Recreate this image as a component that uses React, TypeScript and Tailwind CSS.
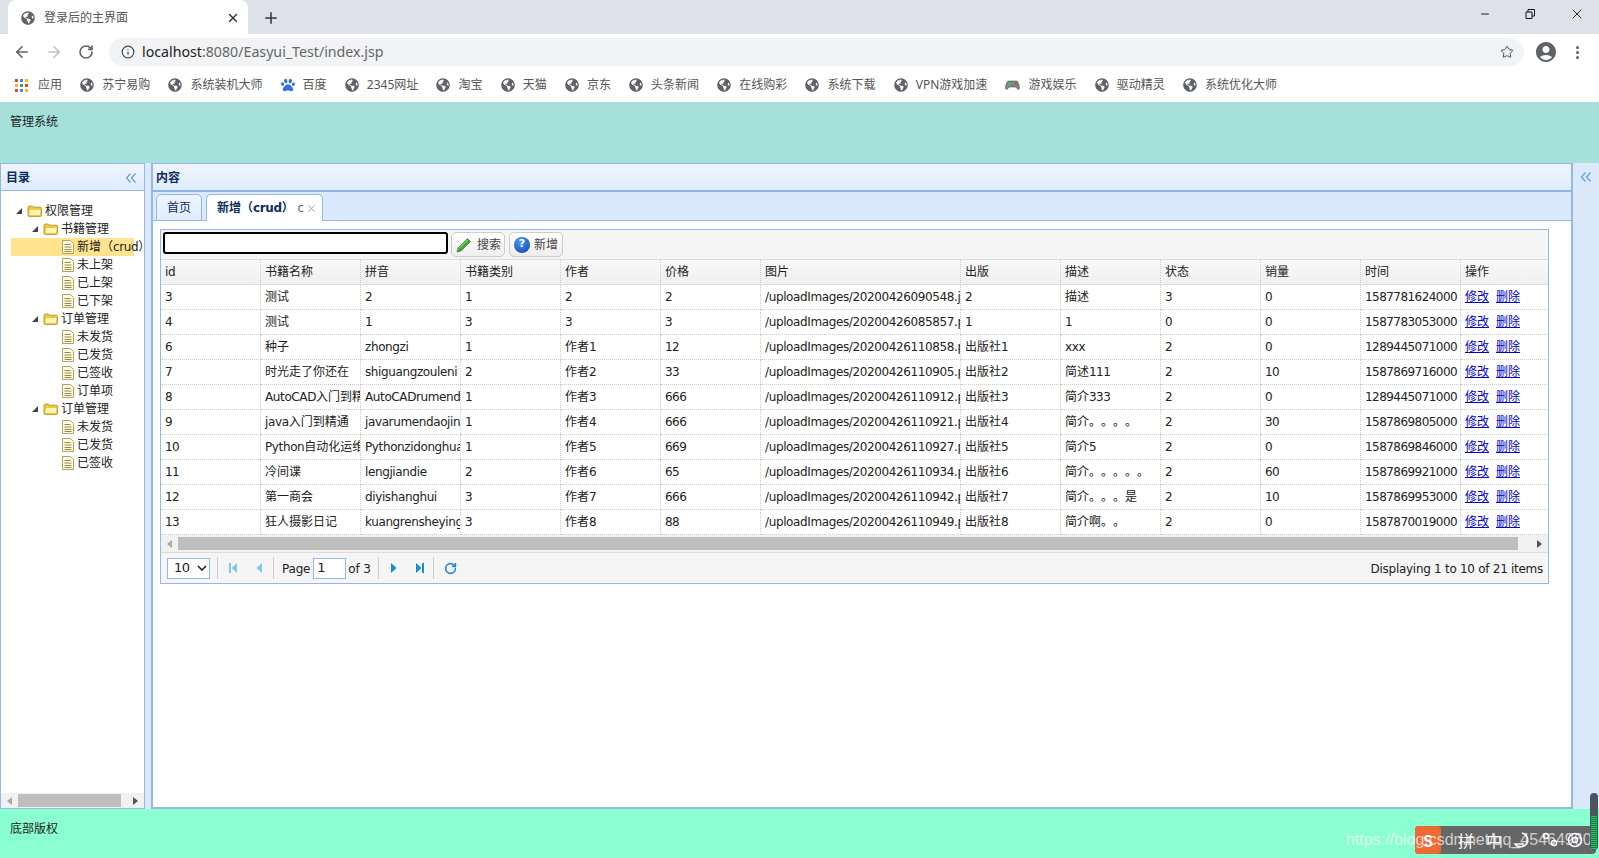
import { ArrowLeft, ArrowRight, Info, Minus, Plus, RotateCw, Star, X } from 'lucide-react';
import { FaGlobeAmericas, FaPaw } from 'react-icons/fa';
import { MdAccountCircle } from 'react-icons/md';

const bookmarks = [
  '苏宁易购', '系统装机大师', '百度', '2345网址', '淘宝', '天猫', '京东', '头条新闻',
  '在线购彩', '系统下载', 'VPN游戏加速', '游戏娱乐', '驱动精灵', '系统优化大师',
];

const columns = ['id', '书籍名称', '拼音', '书籍类别', '作者', '价格', '图片', '出版', '描述', '状态', '销量', '时间', '操作'];

const rows = [
  ['3', '测试', '2', '1', '2', '2', '/uploadImages/20200426090548.jpg', '2', '描述', '3', '0', '1587781624000'],
  ['4', '测试', '1', '3', '3', '3', '/uploadImages/20200426085857.png', '1', '1', '0', '0', '1587783053000'],
  ['6', '种子', 'zhongzi', '1', '作者1', '12', '/uploadImages/20200426110858.png', '出版社1', 'xxx', '2', '0', '1289445071000'],
  ['7', '时光走了你还在', 'shiguangzouleni', '2', '作者2', '33', '/uploadImages/20200426110905.png', '出版社2', '简述111', '2', '10', '1587869716000'],
  ['8', 'AutoCAD入门到精通', 'AutoCADrumendao', '1', '作者3', '666', '/uploadImages/20200426110912.png', '出版社3', '简介333', '2', '0', '1289445071000'],
  ['9', 'java入门到精通', 'javarumendaojing', '1', '作者4', '666', '/uploadImages/20200426110921.png', '出版社4', '简介。。。。', '2', '30', '1587869805000'],
  ['10', 'Python自动化运维', 'Pythonzidonghua', '1', '作者5', '669', '/uploadImages/20200426110927.png', '出版社5', '简介5', '2', '0', '1587869846000'],
  ['11', '冷间谍', 'lengjiandie', '2', '作者6', '65', '/uploadImages/20200426110934.png', '出版社6', '简介。。。。。', '2', '60', '1587869921000'],
  ['12', '第一商会', 'diyishanghui', '3', '作者7', '666', '/uploadImages/20200426110942.png', '出版社7', '简介。。。是', '2', '10', '1587869953000'],
  ['13', '狂人摄影日记', 'kuangrensheying', '3', '作者8', '88', '/uploadImages/20200426110949.png', '出版社8', '简介啊。。', '2', '0', '1587870019000'],
];

const tree: [number, string, boolean, boolean?][] = [
  [0, '权限管理', true],
  [1, '书籍管理', true],
  [2, '新增（crud）', false, true],
  [2, '未上架', false],
  [2, '已上架', false],
  [2, '已下架', false],
  [1, '订单管理', true],
  [2, '未发货', false],
  [2, '已发货', false],
  [2, '已签收', false],
  [2, '订单项', false],
  [1, '订单管理', true],
  [2, '未发货', false],
  [2, '已发货', false],
  [2, '已签收', false],
];

// latin runs are tightened, the reference has hinted Verdana which sets narrower than DejaVu
function T({ s }: { s: string }) {
  const parts = s.match(/[\x00-\x7f]+|[^\x00-\x7f]+/g) ?? [];
  return (
    <>
      {parts.map((p, i) =>
        /^\d+$/.test(p) ? (
          <span key={i} className="tracking-[-0.55px]">{p}</span>
        ) : /^[\x00-\x7f]/.test(p) ? (
          <span key={i} className="tracking-[-0.38px]">{p}</span>
        ) : (
          <span key={i}>{p}</span>
        ),
      )}
    </>
  );
}

function Chevrons({ className }: { className?: string }) {
  return (
    <svg width="12" height="12" viewBox="0 0 12 12" fill="none" stroke="#5d9fdc" strokeWidth="1.2" className={className}>
      <path d="M5.5 1.5 1.5 6l4 4.5M10.5 1.5 6.5 6l4 4.5" />
    </svg>
  );
}

function FolderIcon() {
  return (
    <svg width="16" height="14" viewBox="0 0 16 14" className="shrink-0">
      <path d="M1 3.5C1 2.5 1.7 2 2.5 2h3l1.2 1.2h6.6c.8 0 1.2.5 1.2 1.2V11c0 1-.6 1.6-1.5 1.6h-10C1.6 12.600 1 12 1 11z" fill="#f2c832" stroke="#a98a2a" strokeWidth=".8" />
      <path d="M2.500 5.500h11.500l-.8 5.800H2z" fill="#fff7b8" stroke="#e0b93c" strokeWidth=".6" />
    </svg>
  );
}

function FileIcon() {
  return (
    <svg width="14" height="16" viewBox="0 0 14 16" className="shrink-0">
      <path d="M1.500 1.500h8l3 3v10h-11z" fill="#fffbe0" stroke="#b5a15a" />
      <path d="M3.500 5.500h6M3.500 8h7M3.500 10.500h7M3.500 12.500h7" stroke="#8a7a3c" strokeWidth=".9" />
    </svg>
  );
}

function TreeRow({ level, label, folder, selected }: { level: number; label: string; folder: boolean; selected?: boolean }) {
  const indent = level === 0 ? 'pl-[5px]' : level === 1 ? 'pl-[21px]' : 'pl-[50px]';
  return (
    <div className={`relative flex h-[18px] w-[123px] items-center whitespace-nowrap ${indent} ${selected ? 'bg-[#ffe48d]' : ''}`}>
      {folder && <span className="mr-[5px] h-0 w-0 border-b-[6px] border-l-[6px] border-b-[#444] border-l-transparent" />}
      {folder ? <FolderIcon /> : <FileIcon />}
      <span className="ml-[2px]"><T s={label} /></span>
    </div>
  );
}

function ArrowBar({ dir, bar, light }: { dir: 'l' | 'r'; bar?: boolean; light?: boolean }) {
  const fill = light ? '#82c6ea' : '#0d8fd8';
  return (
    <svg width="12" height="12" viewBox="0 0 12 12">
      {dir === 'l' ? <path d="M9 1v10L3.500 6z" fill={fill} /> : <path d="M3 1v10l5.500-5z" fill={fill} />}
      {bar && dir === 'l' && <rect x="1" y="1" width="2" height="10" fill={fill} />}
      {bar && dir === 'r' && <rect x="9" y="1" width="2" height="10" fill={fill} />}
    </svg>
  );
}

function ScrollArrow({ dir }: { dir: 'l' | 'r' }) {
  return dir === 'l' ? (
    <span className="h-0 w-0 border-y-[4px] border-r-[5px] border-y-transparent border-r-[#aaa]" />
  ) : (
    <span className="h-0 w-0 border-y-[4px] border-l-[5px] border-y-transparent border-l-[#555]" />
  );
}

function Sep() {
  return <span className="block h-[22px] w-px bg-[#ccc]" />;
}

export default function App() {
  return (
    <div className="relative flex h-[858px] w-[1599px] flex-col overflow-hidden bg-white font-['DejaVu_Sans','Noto_Sans_CJK_SC',sans-serif] text-[12px] text-[#222] [text-spacing-trim:space-all]">
      {/* Browser chrome */}
      <div className="h-[102px] shrink-0 font-['Noto_Sans','Noto_Sans_CJK_SC',sans-serif]">
        <div className="flex h-[34px] items-end bg-[#dee1e6]">
          <div className="ml-[8px] flex h-[34px] w-[240px] items-center rounded-t-lg bg-white pl-[13px] pr-[8px] pt-[2px]">
            <FaGlobeAmericas className="h-[14px] w-[14px] text-[#5f6368]" />
            <span className="ml-[9px] flex-1 text-[12px] text-[#555]">登录后的主界面</span>
            <X size={14} strokeWidth={2.4} className="text-[#333]" />
          </div>
          <Plus size={18} strokeWidth={2} className="mb-[7px] ml-[14px] text-[#333]" />
          <div className="flex-1" />
          <div className="mb-[12px] flex items-center text-[#111]">
            <Minus size={12} strokeWidth={1.8} className="mr-[34px]" />
            <svg width="10" height="10" viewBox="0 0 10 10" fill="none" stroke="#111" className="mr-[34px]">
              <path d="M1 3h6v6.500H1zM3 3V.5h6.500V7H7" />
            </svg>
            <X size={16} strokeWidth={1.3} className="mr-[14px]" />
          </div>
        </div>
        <div className="flex h-[34px] items-center bg-white pt-[2px]">
          <ArrowLeft size={18} strokeWidth={2.2} className="ml-[13px] text-[#5f6368]" />
          <ArrowRight size={18} strokeWidth={2.2} className="ml-[14px] text-[#bdc1c6]" />
          <RotateCw size={16} strokeWidth={2.4} className="ml-[15px] text-[#5f6368]" />
          <div className="ml-[15px] flex h-[28px] w-[1415px] items-center rounded-full bg-[#f1f3f4] pl-[12px] pr-[10px]">
            <Info size={14} className="text-[#444]" />
            <span className="ml-[7px] flex-1 text-[14.200px] text-[#666]">
              <span className="text-[#222]">localhost</span>:8080/Easyui_Test/index.jsp
            </span>
            <Star size={14} strokeWidth={1.6} className="text-[#444]" />
          </div>
          <MdAccountCircle className="ml-[10px] h-[24px] w-[24px] text-[#5f6368]" />
          <div className="ml-[18px] flex flex-col gap-[2px]">
            <span className="h-[3px] w-[3px] rounded-full bg-[#5f6368]" />
            <span className="h-[3px] w-[3px] rounded-full bg-[#5f6368]" />
            <span className="h-[3px] w-[3px] rounded-full bg-[#5f6368]" />
          </div>
        </div>
        <div className="flex h-[34px] items-center gap-[18.200px] pl-[15px] text-[12px] text-[#555]">
          <div className="flex items-center gap-[10px]">
            <svg width="13" height="13" viewBox="0 0 13 13">
              {[0, 5, 10].map((y, r) =>
                [0, 5, 10].map((x, c) => (
                  <rect key={`${r}${c}`} x={x} y={y} width="3" height="3" fill={['#ea4335', '#4285f4', '#fbbc05', '#34a853'][(r * 2 + c) % 4]} />
                )),
              )}
            </svg>
            <span>应用</span>
          </div>
          {bookmarks.map((b) => (
            <div key={b} className="flex items-center gap-[8px]">
              {b === '百度' ? (
                <FaPaw className="h-[14px] w-[14px] text-[#2f6fe8]" />
              ) : b === '游戏娱乐' ? (
                <svg width="15" height="14" viewBox="0 0 15 14">
                  <path d="M3.500 3h8c1.500 0 2.500 3 3 6.500.2 2-1.500 2.500-2.500 1L10.500 9h-6L3 10.500c-1 1.500-2.700 1-2.500-1C1 6 2 3 3.500 3z" fill="#7d8a80" stroke="#444" strokeWidth=".5" />
                  <circle cx="11" cy="5.500" r="1" fill="#d33" />
                  <path d="M3 5.500h3M4.500 4v3" stroke="#2c7" />
                </svg>
              ) : (
                <FaGlobeAmericas className="h-[14px] w-[14px] text-[#5f6368]" />
              )}
              <span>{b}</span>
            </div>
          ))}
        </div>
      </div>

      {/* Header */}
      <div className="h-[61px] shrink-0 bg-[#a5e0da] pl-[10px] pt-[11px]">管理系统</div>

      {/* Body */}
      <div className="flex min-h-0 flex-1 bg-[#dbe9fb]">
        {/* West panel */}
        <div className="flex w-[145px] shrink-0 flex-col border border-[#95b8e7] bg-white">
          <div className="flex h-[27px] shrink-0 items-center justify-between border-b border-[#95b8e7] bg-gradient-to-b from-[#eff5ff] to-[#e0ecff] pl-[5px] pr-[7px] pt-[2px] font-bold text-[#0e2d5f]">
            <span>目录</span>
            <Chevrons />
          </div>
          <div className="min-h-0 flex-1 overflow-hidden pl-[10px] pt-[11px]">
            {tree.map(([level, label, folder, selected], i) => (
              <TreeRow key={i} level={level} label={label} folder={folder} selected={selected} />
            ))}
          </div>
          <div className="flex h-[15px] shrink-0 items-center bg-[#f1f1f1] pl-[6px] pr-[6px]">
            <ScrollArrow dir="l" />
            <span className="ml-[6px] h-[13px] w-[103px] bg-[#bdbdbd]" />
            <span className="ml-auto flex"><ScrollArrow dir="r" /></span>
          </div>
        </div>

        {/* Center panel */}
        <div className="ml-[6px] flex w-[1422px] shrink-0 flex-col border-x-2 border-b-2 border-t border-x-[#95b8e7] border-b-[#95b8e7] border-t-[#95b8e7] bg-white">
          <div className="flex h-[28px] shrink-0 items-center border-b-2 border-[#8db4e2] bg-gradient-to-b from-[#eff5ff] to-[#e0ecff] pl-[3px] pt-[2px] font-bold text-[#0e2d5f]">
            内容
          </div>
          <div className="flex h-[29px] shrink-0 items-end gap-[4px] border-b border-[#95b8e7] bg-[#dae9fb] pl-[3px]">
            <div className="-mb-px flex h-[27px] w-[46px] items-center justify-center rounded-t-[5px] border border-[#95b8e7] bg-gradient-to-b from-[#eff5ff] to-[#e0ecff] text-[#0e2d5f]">
              首页
            </div>
            <div className="-mb-px flex h-[27px] w-[117px] items-center rounded-t-[5px] border border-b-0 border-[#95b8e7] bg-white pl-[10px] font-bold text-[#0e2d5f]">
              <span className="flex-1"><T s="新增（crud）" /></span>
              <span className="mr-[2px] text-[12px] font-normal text-[#666]">c</span>
              <X size={11} strokeWidth={1.8} className="mr-[5px] text-[#7a97bb]" />
            </div>
          </div>

          <div className="px-[7px] pt-[8px]">
            <div className="w-[1389px] border border-[#95b8e7]">
              {/* Toolbar */}
              <div className="flex h-[29px] items-start bg-[#f5f5f5] pl-[2px] pt-[2px]">
                <div className="h-[22px] w-[285px] rounded-[3px] border-2 border-black bg-white" />
                <button className="ml-[3px] flex h-[25px] w-[54px] items-center rounded-[5px] border border-[#ccc] bg-gradient-to-b from-white to-[#eee] pl-[4px] text-[#444]">
                  <svg width="16" height="16" viewBox="0 0 16 16">
                    <path d="M11.500 1.500 14.500 4.500 5 14l-4 1 1-4z" fill="#3fa83a" stroke="#1f7a22" strokeWidth=".6" />
                    <path d="M3 11.500 11.500 3" stroke="#a5e08e" />
                  </svg>
                  <span className="ml-[5px]">搜索</span>
                </button>
                <button className="ml-[4px] flex h-[25px] w-[54px] items-center rounded-[5px] border border-[#ccc] bg-gradient-to-b from-white to-[#eee] pl-[4px] text-[#444]">
                  <span className="flex h-[16px] w-[16px] items-center justify-center rounded-full bg-[radial-gradient(circle_at_40%_30%,#4a9bf0,#0b3fae)] text-[11px] font-bold text-white">
                    ?
                  </span>
                  <span className="ml-[4px]">新增</span>
                </button>
              </div>

              {/* Table */}
              <div className="overflow-hidden">
                <table className="w-[1400px] table-fixed border-separate border-spacing-0">
                  <colgroup>
                    {columns.map((c) => (
                      <col key={c} className={c === '图片' ? 'w-[200px]' : 'w-[100px]'} />
                    ))}
                  </colgroup>
                  <thead>
                    <tr className="h-[26px] bg-gradient-to-b from-[#f9f9f9] to-[#efefef]">
                      {columns.map((c) => (
                        <th key={c} className="overflow-hidden whitespace-nowrap border-b border-r border-t border-b-[#ddd] border-r-[#ccc] border-t-[#ddd] px-[4px] text-left font-normal [border-right-style:dotted]">
                          <T s={c} />
                        </th>
                      ))}
                    </tr>
                  </thead>
                  <tbody>
                    {rows.map((r) => (
                      <tr key={r[0]} className="h-[25px]">
                        {r.map((v, i) => (
                          <td key={i} className="overflow-hidden whitespace-nowrap border-b border-r border-dotted border-[#ccc] px-[4px] py-0">
                            <T s={v} />
                          </td>
                        ))}
                        <td className="overflow-hidden whitespace-nowrap border-b border-r border-dotted border-[#ccc] px-[4px] py-0">
                          <a className="cursor-pointer text-[#00c] underline">修改</a>
                          <a className="ml-[7px] cursor-pointer text-[#00c] underline">删除</a>
                        </td>
                      </tr>
                    ))}
                  </tbody>
                </table>
              </div>

              {/* Horizontal scrollbar */}
              <div className="flex h-[18px] items-center border-b border-[#ddd] bg-[#f1f1f1] px-[6px]">
                <ScrollArrow dir="l" />
                <span className="ml-[6px] h-[13px] w-[1340px] bg-[#bdbdbd]" />
                <span className="ml-auto flex"><ScrollArrow dir="r" /></span>
              </div>

              {/* Pager */}
              <div className="flex h-[30px] items-center bg-[#f5f5f5] pl-[6px] pr-[5px]">
                <div className="flex h-[21px] w-[43px] items-center justify-between border border-[#95b8e7] bg-white pl-[6px] pr-[2px] text-[13px]">
                  <span className="tracking-[-0.45px]">10</span>
                  <svg width="10" height="6" viewBox="0 0 10 6" fill="none" stroke="#222" strokeWidth="1.600">
                    <path d="M1 1l4 4 4-4" />
                  </svg>
                </div>
                <span className="mx-[7px]"><Sep /></span>
                <span className="ml-[3px] flex w-[25px]"><ArrowBar dir="l" bar light /></span>
                <span className="flex w-[20px]"><ArrowBar dir="l" light /></span>
                <Sep />
                <span className="ml-[8px] translate-y-px tracking-[-0.2px]">Page</span>
                <div className="ml-[3px] h-[21px] w-[33px] border border-[#95b8e7] bg-white pl-[3px] text-[13px] leading-[17px]">1</div>
                <span className="ml-[2px] translate-y-px tracking-[-0.1px]">of 3</span>
                <span className="ml-[7px]"><Sep /></span>
                <span className="ml-[9px] flex w-[25px]"><ArrowBar dir="r" /></span>
                <span className="flex w-[20px]"><ArrowBar dir="r" bar /></span>
                <Sep />
                <RotateCw size={13} strokeWidth={3} className="ml-[10px] text-[#2a8ac4]" />
                <span className="ml-auto translate-y-px tracking-[-0.28px]">Displaying 1 to 10 of 21 items</span>
              </div>
            </div>
          </div>
        </div>

        {/* East collapsed panel */}
        <div className="flex flex-1 justify-center pt-[8px]">
          <Chevrons />
        </div>
      </div>

      {/* Footer */}
      <div className="h-[49px] shrink-0 bg-[#8affd0] pl-[10px] pt-[11px]">底部版权</div>

      {/* Screenshot overlays: IME bar, watermark */}
      <div className="absolute left-[1415px] top-[826px] flex h-[28px] w-[181px] items-center rounded-[4px] bg-[#666] font-['Noto_Sans_CJK_SC',sans-serif] text-[16px] text-white">
        <span className="flex h-[28px] w-[26px] items-center justify-center rounded-[4px] bg-[#ee6a35] font-bold">S</span>
        <span className="ml-[17px]">拼</span>
        <span className="ml-[12px]">中</span>
        <svg width="20" height="18" viewBox="0 0 20 18" fill="none" stroke="#fff" strokeWidth="1.500" className="ml-[11px]">
          <path d="M9 2a7 7 0 1 1-7 11h9" />
        </svg>
        <svg width="16" height="16" viewBox="0 0 16 16" fill="none" stroke="#fff" strokeWidth="1.500" className="ml-[9px]">
          <circle cx="4" cy="4" r="2.500" />
          <circle cx="12" cy="11" r="2.500" />
        </svg>
        <svg width="16" height="16" viewBox="0 0 16 16" fill="none" stroke="#fff" strokeWidth="1.500" className="ml-[9px]">
          <circle cx="8" cy="8" r="6.500" />
          <circle cx="8" cy="8" r="2.500" />
        </svg>
      </div>
      <div className="absolute left-[1346px] top-[828px] whitespace-nowrap font-['Liberation_Sans',sans-serif] text-[16px] text-white/70">
        https://blog.csdn.net/qq_45464960
      </div>
      <div className="absolute left-[1590px] top-[793px] flex h-[57px] w-[8px] flex-col justify-end rounded-[4px] bg-[#4b5560] px-px pb-px">
        <div className="h-[33px] bg-[repeating-linear-gradient(to_bottom,#2fc06c_0,#2fc06c_1px,#1b7a44_1px,#1b7a44_2px)]" />
      </div>
    </div>
  );
}
